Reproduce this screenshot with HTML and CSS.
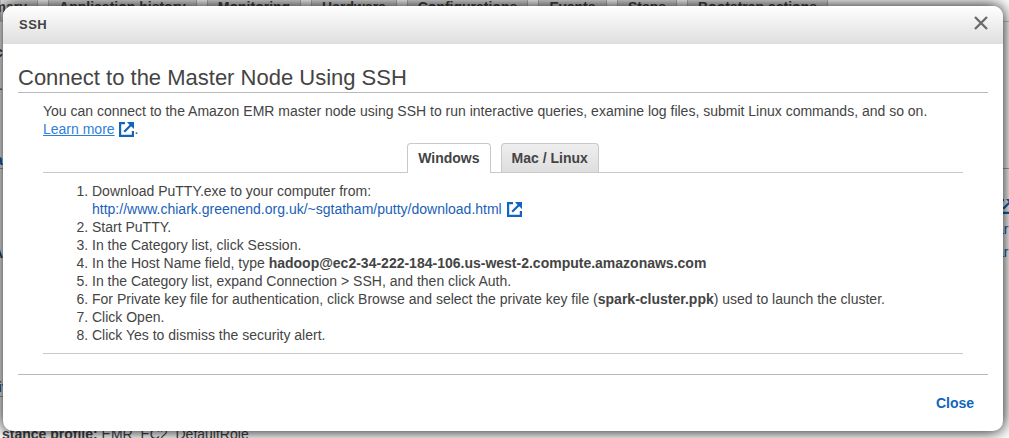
FILE: index.html
```html
<!DOCTYPE html>
<html lang="en">
<head>
<meta charset="utf-8">
<title>SSH</title>
<link rel="stylesheet" href="styles.css">
</head>
<body>
<svg class="sprites" aria-hidden="true">
  <symbol id="external" viewBox="0 0 15 15">
    <path d="M6 1.1H1.1V13.9H13.9V9" fill="none" stroke="currentColor" stroke-width="2.2"/>
    <path d="M5.2 9.8L12.5 2.5" fill="none" stroke="currentColor" stroke-width="2.2"/>
    <path d="M8 0H15V7L12.6 4.8L10.2 2.4Z" fill="currentColor"/>
  </symbol>
</svg>
<div class="page">
  <div class="page-tabs">
    <span class="page-tab first">Summary</span>
    <span class="page-tab history">Application history</span>
    <span class="page-tab monitoring">Monitoring</span>
    <span class="page-tab hardware">Hardware</span>
    <span class="page-tab configurations">Configurations</span>
    <span class="page-tab events">Events</span>
    <span class="page-tab steps">Steps</span>
    <span class="page-tab bootstrap">Bootstrap actions</span>
  </div>
  <div class="page-body">
    <div class="page-left">
      <b class="row row-c">c</b>
      <span class="row row-dot">.</span>
      <b class="row row-link">a</b>
      <b class="row row-a">A</b>
      <b class="row row-security">it</b>
      <div class="row profile"><b>stance profile:</b> EMR_EC2_DefaultRole</div>
    </div>
    <div class="page-right">
      <svg class="ext"><use href="#external"/></svg>
      <span>ar</span>
      <span>ar</span>
    </div>
  </div>
</div>
<section class="modal">
  <header class="modal-header">
    <h1 class="modal-title">SSH</h1>
    <svg class="dismiss" viewBox="0 0 14 14"><path d="M1 1L13 13M13 1L1 13" fill="none" stroke="#6b6b6b" stroke-width="2.3"/></svg>
  </header>
  <div class="modal-body">
    <h2 class="heading">Connect to the Master Node Using SSH</h2>
    <div class="content">
      <p class="intro">You can connect to the Amazon EMR master node using SSH to run interactive queries, examine log files, submit Linux commands, and so on.<br><a class="link underlined">Learn more</a> <svg class="ext"><use href="#external"/></svg>.</p>
      <div class="tabs">
        <span class="tab active">Windows</span>
        <span class="tab">Mac / Linux</span>
      </div>
      <ol class="steps-list">
        <li>Download PuTTY.exe to your computer from:<br><a class="link">http://www.chiark.greenend.org.uk/~sgtatham/putty/download.html</a> <svg class="ext"><use href="#external"/></svg></li>
        <li>Start PuTTY.</li>
        <li>In the Category list, click Session.</li>
        <li>In the Host Name field, type <b>hadoop@ec2-34-222-184-106.us-west-2.compute.amazonaws.com</b></li>
        <li>In the Category list, expand Connection &gt; SSH, and then click Auth.</li>
        <li>For Private key file for authentication, click Browse and select the private key file (<b>spark-cluster.ppk</b>) used to launch the cluster.</li>
        <li>Click Open.</li>
        <li>Click Yes to dismiss the security alert.</li>
      </ol>
    </div>
    <footer class="modal-footer"><a class="close">Close</a></footer>
  </div>
</section>
</body>
</html>
```
FILE: styles.css
```css
* { box-sizing: border-box; }
body {
  margin: 0;
  height: 438px;
  overflow: hidden;
  position: relative;
  background: #fff;
  color: #444;
  font: 14px/18px "Liberation Sans", Arial, sans-serif;
}
.sprites { display: none; }
.ext { width: 15px; height: 15px; color: #1166bb; }

/* Page underneath the dialog */
.page { height: 438px; overflow: hidden; }
.page-tabs {
  display: flex;
  gap: 10px;
  height: 22px;
  border-bottom: 1px solid #ccc;
}
.page-tab {
  height: 21px;
  line-height: 15px;
  text-align: center;
  font-weight: bold;
  white-space: nowrap;
  background: #dedede;
  border: solid #bbb;
  border-width: 0 1px;
}
.first { width: 38px; display: flex; justify-content: flex-end; padding-right: 10px; }
.history { width: 149px; }
.monitoring { width: 94px; }
.hardware { width: 86px; }
.configurations { width: 121px; }
.events { width: 69px; }
.steps { width: 60px; }
.bootstrap { width: 141px; }
.page-body { display: flex; justify-content: space-between; height: 416px; }
.page-left { display: flex; flex-direction: column; width: 400px; }
.row { flex: none; }
.row-c { height: 33px; padding-top: 21px; margin-left: -5px; }
.row-dot { height: 80px; padding-top: 21px; margin-left: -1px; }
.row-link { height: 34px; padding-top: 16px; margin-left: -5px; color: #1166bb; border-bottom: 1px solid #aaa; }
.row-a { height: 120px; padding-top: 75px; margin-left: -7px; }
.row-security { height: 108px; padding-top: 89px; margin-left: -2px; color: #2a5aa0; border-bottom: 1px solid #aaa; }
.profile { padding: 28px 0 0 2px; white-space: nowrap; }
.page-right {
  display: flex;
  flex-direction: column;
  width: 9px;
  margin-top: 146px;
  padding-top: 30px;
  border-top: 1px solid #aaa;
  color: #1166bb;
  overflow: hidden;
}
.page-right .ext { flex: none; margin-left: -2px; }
.page-right span { height: 23px; padding-top: 6px; margin-left: -4px; }

/* Dialog */
.modal {
  position: absolute;
  left: 3px;
  top: 6px;
  width: 1000px;
  height: 425px;
  overflow: hidden;
  border-radius: 10px;
  background: #fff;
  box-shadow: 0 0 16px #000;
}
.modal-header {
  display: flex;
  align-items: center;
  justify-content: space-between;
  height: 38px;
  padding: 0 15px 0 16px;
  background: linear-gradient(#fff, #dedede);
}
.modal-title { margin: 0; font-size: 13px; letter-spacing: .5px; }
.dismiss { width: 14px; height: 14px; margin-bottom: 5px; }
.modal-body { padding: 20px 15px 0; }
.heading {
  margin: 0;
  height: 29px;
  border-bottom: 1px solid #b8b8b8;
  font-size: 22px;
  font-weight: normal;
  line-height: 27px;
}
.content { margin: 9px 25px 0; border-bottom: 1px solid #c9c9c9; }
.intro { margin: 0; height: 41px; white-space: nowrap; }
.intro .ext, .steps-list .ext { vertical-align: -3px; margin-left: 1px; }
.link { color: #1a5fb8; }
.underlined { color: #2e7fdc; text-decoration: underline; }
.tabs {
  display: flex;
  justify-content: center;
  gap: 10px;
  height: 30px;
  border-bottom: 1px solid #c9c9c9;
}
.tab {
  height: 29px;
  padding: 5px 10px 0;
  border: 1px solid #c9c9c9;
  border-bottom: 0;
  border-radius: 4px 4px 0 0;
  background: linear-gradient(#eee, #dedede);
  font-weight: bold;
}
.tab.active { height: 30px; background: #fff; }
.steps-list { margin: 0; padding: 9px 0 9px 49px; white-space: nowrap; }
.modal-footer {
  display: flex;
  justify-content: flex-end;
  margin-top: 20px;
  padding: 19px 14px 0;
  border-top: 1px solid #b8b8b8;
}
.close { color: #1166bb; font-weight: bold; }
```
